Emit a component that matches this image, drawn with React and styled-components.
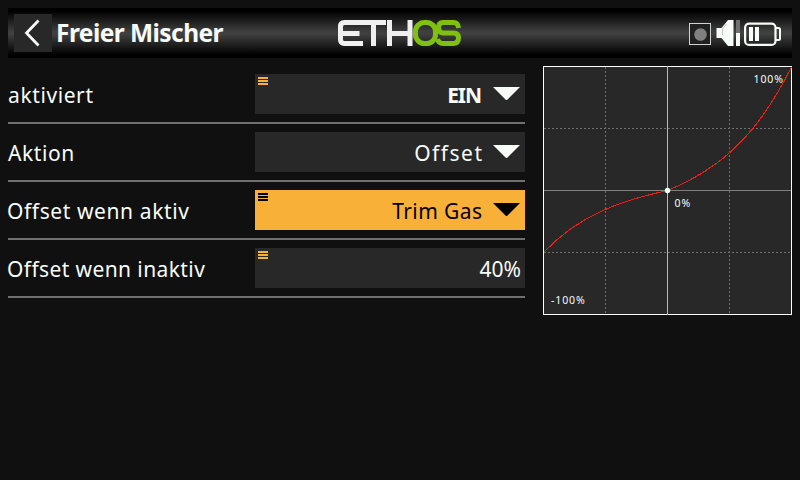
import React from 'react';
import styled, { createGlobalStyle } from 'styled-components';

const GlobalStyle = createGlobalStyle`
  * { box-sizing: border-box; }
  body { margin: 0; background: #101010; font-family: "Noto Sans", "Open Sans", sans-serif; }
`;

const Screen = styled.div`
  width: 800px;
  height: 480px;
  padding: 8px 8px 0;
  overflow: hidden;
  background: #101010;
  color: #f8fcf8;
`;

const TopBar = styled.header`
  display: grid;
  grid-template-columns: 1fr auto 1fr;
  align-items: center;
  height: 50px;
  background: linear-gradient(#000 0%, #000 6%, #404040 48%, #404040 52%, #000 94%, #000 100%);
`;

const TitleGroup = styled.div`
  display: flex;
  align-items: center;
  gap: 4px;
  padding-left: 6px;
`;

const BackButton = styled.button`
  width: 38px;
  height: 38px;
  padding: 0;
  border: 0;
  background: #282828;
  svg { display: block; }
`;

const Title = styled.h1`
  margin: 0;
  font-size: 24.5px;
  line-height: 38px;
  font-weight: 700;
  letter-spacing: -0.55px;
  white-space: nowrap;
`;

const StatusGroup = styled.div`
  display: flex;
  justify-content: flex-end;
  padding-right: 10px;
`;

const Content = styled.main`
  display: flex;
  justify-content: space-between;
  padding-top: 8px;
`;

const Form = styled.div`
  width: 517px;
`;

const Row = styled.div`
  display: grid;
  grid-template-columns: 247px 270px;
  align-items: center;
  height: 58px;
  border-bottom: 2px solid #707070;
`;

const Label = styled.span`
  padding-top: 2px;
  margin-left: ${(p) => p.$shift || '0'};
  font-size: 21px;
  line-height: 40px;
  letter-spacing: ${(p) => p.$spacing || '0.6px'};
  white-space: nowrap;
`;

const Field = styled.div`
  position: relative;
  display: flex;
  justify-content: flex-end;
  align-items: center;
  gap: 11px;
  height: 40px;
  padding-right: ${(p) => (p.$plain ? '4px' : '5px')};
  background: ${(p) => (p.$active ? '#f8b038' : '#282828')};
  color: ${(p) => (p.$active ? '#000' : '#f8fcf8')};
`;

const Value = styled.span`
  padding-top: 2px;
  margin-right: calc(-1 * ${(p) => p.$spacing});
  font-size: 21px;
  line-height: 40px;
  font-weight: ${(p) => (p.$bold ? 700 : 400)};
  letter-spacing: ${(p) => p.$spacing};
`;

const Arrow = styled.svg`
  flex: none;
  margin-bottom: 1px;
`;

const MenuMark = styled.svg`
  position: absolute;
  left: 3px;
  top: 3px;
  color: ${(p) => (p.$active ? '#000' : '#f8b038')};
`;

const Chart = styled.svg`
  display: block;
  text {
    font-family: "Noto Sans", sans-serif;
    font-size: 10.5px;
    letter-spacing: 0.9px;
    fill: #f8fcf8;
  }
`;

const rows = [
  { label: 'aktiviert', value: 'EIN', menu: true, arrow: true, bold: true, spacing: '-1.1px' },
  { label: 'Aktion', value: 'Offset', arrow: true, spacing: '1.5px' },
  { label: 'Offset wenn aktiv', value: 'Trim Gas', menu: true, arrow: true, active: true, spacing: '0.4px', shift: '-1px' },
  { label: 'Offset wenn inaktiv', value: '40%', menu: true, spacing: '0px', shift: '-1px', labelSpacing: '0.4px' },
];

function Logo() {
  return (
    <svg width="124" height="26" viewBox="0 0 124 26" fill="none" strokeWidth="5">
      <g stroke="#f0f0f0">
        <path d="M26 2.5H6.500Q2.500 2.500 2.500 6.500V19.500Q2.500 23.500 6.500 23.500H25M2.500 13.500H21.500" />
        <path d="M25 2.5H48M35.500 2.500V26M51.500 0V26M51.500 13.500H72M72 0V26" />
      </g>
      <g stroke="#80c010">
        <rect x="77.500" y="2.500" width="20" height="21" rx="9" />
        <path d="M120.500 8Q120 2.500 115.500 2.500H105Q100.500 2.500 100.500 7.500T105 13H115.500Q120.500 13 120.500 18T115.500 23.500H105Q100.500 23.500 99.500 19" />
      </g>
    </svg>
  );
}

function StatusIcons() {
  return (
    <svg width="93" height="28" viewBox="689 19 93 28">
      <rect x="689.5" y="23.500" width="21" height="21" fill="#202020" stroke="#d0d4d0" />
      <circle cx="700.5" cy="34.500" r="6.300" fill="#808080" />
      <path d="M716.500 28h5l6.500-8h5.500v26h-5.500l-6.500-8h-5z" fill="#f8fcf8" />
      <path d="M722.500 35V29l4-5" fill="none" stroke="#c0c4c0" />
      <path fill="#707070" d="M736 20h4v13h-4z" />
      <path fill="#f8fcf8" d="M736 33h4v13h-4z" />
      <rect x="745.100" y="23.600" width="30.400" height="21.300" rx="4" fill="none" stroke="#f8fcf8" strokeWidth="2.200" />
      <path d="M776 28h2.500q1.500 0 1.500 1.500v9q0 1.500-1.500 1.500h-2.500" fill="none" stroke="#f8fcf8" strokeWidth="2" />
      <path d="M749 27h4v14h-4zM755 27h4v14h-4z" fill="#f8fcf8" />
    </svg>
  );
}

function CurveChart() {
  return (
    <Chart width="249" height="249" viewBox="0 0 249 249">
      <rect x="0.5" y="0.5" width="248" height="248" fill="#282828" stroke="#fff" />
      <path d="M62.5 1V248M186.5 1V248M1 62.5H248M1 186.500H248" stroke="#707070" strokeDasharray="2 2" />
      <path d="M1 124.500H248" stroke="#808080" />
      <path d="M124.500 0V249" stroke="#f8b038" />
      <path
        d="M0.500 186.500C37 148 80 134 124.500 124.500C177 103 214 70 248.500 1"
        fill="none" stroke="#e82018" strokeWidth="1.100" shapeRendering="crispEdges"
      />
      <circle cx="124.500" cy="124.500" r="2.700" fill="#fff" />
      <text x="210.500" y="17">100%</text>
      <text x="131.500" y="141">0%</text>
      <text x="8" y="238">-100%</text>
    </Chart>
  );
}

export default function App() {
  return (
    <Screen>
      <GlobalStyle />
      <TopBar>
        <TitleGroup>
          <BackButton aria-label="Zurück">
            <svg width="38" height="38" fill="none" stroke="#f8fcf8" strokeWidth="2.800">
              <path d="M24.500 6.500L12.500 19L24.500 31.500" />
            </svg>
          </BackButton>
          <Title>Freier Mischer</Title>
        </TitleGroup>
        <Logo />
        <StatusGroup><StatusIcons /></StatusGroup>
      </TopBar>
      <Content>
        <Form>
          {rows.map((r) => (
            <Row key={r.label}>
              <Label $shift={r.shift} $spacing={r.labelSpacing}>{r.label}</Label>
              <Field $active={r.active} $plain={!r.arrow}>
                {r.menu && (
                  <MenuMark $active={r.active} width="10" height="8">
                    <path d="M0 0h10v2H0zM0 3h10v2H0zM0 6h10v2H0z" fill="currentColor" />
                  </MenuMark>
                )}
                <Value $bold={r.bold} $spacing={r.spacing}>{r.value}</Value>
                {r.arrow && (
                  <Arrow width="27" height="13"><path d="M0 0H27L13.500 13.500Z" fill="currentColor" /></Arrow>
                )}
              </Field>
            </Row>
          ))}
        </Form>
        <CurveChart />
      </Content>
    </Screen>
  );
}
